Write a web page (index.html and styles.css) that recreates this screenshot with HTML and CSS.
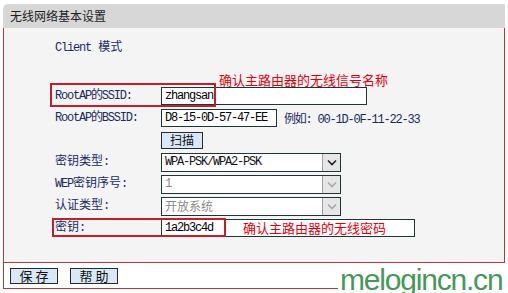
FILE: index.html
```html
<!DOCTYPE html>
<html lang="zh-CN">
  <head>
    <meta charset="UTF-8" />
    <meta name="viewport" content="width=device-width, initial-scale=1.0" />
    <title>无线网络基本设置</title>
    <link rel="stylesheet" href="styles.css">
  </head>
  <body>
    <div class="page">
      <div class="title">无线网络基本设置</div>
      <div class="panel">
        <div class="mode"><span class="lat">Client</span> 模式</div>
        <div class="form">
          <div class="row">
            <label class="lat">RootAP的SSID:</label>
            <input class="text ssid" type="text" value="zhangsan" />
            <span class="mark mark-ssid"></span>
            <span class="note note-ssid">确认主路由器的无线信号名称</span>
          </div>
          <div class="row">
            <label class="lat">RootAP的BSSID:</label>
            <input class="text bssid" type="text" value="D8-15-0D-57-47-EE" />
            <span class="hint lat">例如: 00-1D-0F-11-22-33</span>
          </div>
          <div class="row">
            <label></label>
            <button class="btn scan">扫描</button>
          </div>
          <div class="row">
            <label>密钥类型:</label>
            <div class="select">
              <span class="value lat">WPA-PSK/WPA2-PSK</span>
              <span class="arrow">
                <svg width="10" height="7" viewBox="0 0 10 7"><polyline points="1,1.5 5,5.5 9,1.5" fill="none" stroke="#222" stroke-width="1.6" /></svg>
              </span>
            </div>
          </div>
          <div class="row">
            <label><span class="lat">WEP</span>密钥序号:</label>
            <div class="select disabled">
              <span class="value lat">1</span>
              <span class="arrow">
                <svg width="10" height="7" viewBox="0 0 10 7"><polyline points="1,1.5 5,5.5 9,1.5" fill="none" stroke="#a8a8a8" stroke-width="1.6" /></svg>
              </span>
            </div>
          </div>
          <div class="row">
            <label>认证类型:</label>
            <div class="select disabled">
              <span class="value cjk">开放系统</span>
              <span class="arrow">
                <svg width="10" height="7" viewBox="0 0 10 7"><polyline points="1,1.5 5,5.5 9,1.5" fill="none" stroke="#a8a8a8" stroke-width="1.6" /></svg>
              </span>
            </div>
          </div>
          <div class="row">
            <label>密钥:</label>
            <input class="text key" type="text" value="1a2b3c4d" />
            <span class="mark mark-key"></span>
            <span class="note note-key">确认主路由器的无线密码</span>
          </div>
        </div>
      </div>
      <div class="actions">
        <button class="btn">保 存</button>
        <button class="btn">帮 助</button>
      </div>
      <div class="watermark">melogincn.cn</div>
    </div>
  </body>
</html>
```

FILE: styles.css
```css
* {
  margin: 0;
  padding: 0;
  box-sizing: border-box;
}

body {
  font-family: "Liberation Mono", "Noto Sans CJK SC", monospace;
  font-size: 12px;
  color: #1a2a66;
  background: #ffffff;
}

.lat {
  letter-spacing: -1.2px;
}

.page {
  position: relative;
  width: 502px;
  height: 289px;
  margin: 4px 0 0 3px;
}

.title {
  height: 24px;
  line-height: 24px;
  padding-left: 7px;
  background: #d7d7d7;
  border-radius: 5px 0 0 0;
  color: #222222;
  font-family: "Noto Sans CJK SC", sans-serif;
  font-size: 12px;
}

.panel {
  height: 235px;
  padding: 11px 0 0 51px;
  background: #f4f4f4;
  border: 1px solid #b23a3a;
  border-top: none;
}

.mode {
  height: 18px;
  line-height: 18px;
}

.form {
  margin-top: 28px;
}

.row {
  position: relative;
  display: flex;
  align-items: center;
  height: 22px;
}

.row label {
  width: 106px;
  line-height: 16px;
}

.text {
  height: 18px;
  padding: 0 3px;
  font-family: "Liberation Mono", monospace;
  font-size: 12px;
  letter-spacing: -1.2px;
  color: #000000;
  background: #ffffff;
  border: 1px solid #1f3535;
  outline: none;
}

.ssid {
  width: 206px;
}

.bssid {
  width: 116px;
}

.key {
  width: 254px;
}

.hint {
  margin-left: 7px;
}

.btn {
  display: flex;
  align-items: center;
  justify-content: center;
  width: 48px;
  height: 16px;
  background: #d9e8f8;
  border: 1px solid #2a2a2a;
  font-family: "Noto Sans CJK SC", sans-serif;
  font-size: 13px;
  line-height: 14px;
  color: #111111;
}

.scan {
  width: 42px;
  height: 17px;
  font-size: 12px;
}

.select {
  display: flex;
  align-items: center;
  width: 180px;
  height: 19px;
  background: #ffffff;
  border: 1px solid #1f3535;
  color: #111111;
}

.select .value {
  flex: 1;
  padding-left: 3px;
  line-height: 16px;
}

.select .cjk {
  font-family: "Noto Sans CJK SC", sans-serif;
}

.select.disabled .value {
  color: #8a8a8a;
}

.arrow {
  display: flex;
  align-items: center;
  justify-content: center;
  width: 18px;
  height: 100%;
  background: #e6e6e6;
  border-left: 1px solid #a0a0a0;
}

.mark {
  position: absolute;
  border: 2px solid #c0202c;
}

.mark-ssid {
  top: -2px;
  left: -5px;
  width: 166px;
  height: 24px;
}

.mark-key {
  top: 1px;
  left: -3px;
  width: 174px;
  height: 19px;
}

.note {
  position: absolute;
  font-family: "Noto Sans CJK SC", sans-serif;
  font-size: 13px;
  line-height: 16px;
  color: #e0000c;
}

.note-ssid {
  top: -13px;
  left: 164px;
}

.note-key {
  top: 3px;
  left: 188px;
}

.actions {
  display: flex;
  gap: 12px;
  height: 26px;
  padding: 5px 0 0 6px;
  border-left: 1px solid #b23a3a;
  border-bottom: 1px solid #b23a3a;
}

.watermark {
  position: absolute;
  right: 0;
  bottom: 0;
  width: 167px;
  height: 28px;
  padding-left: 2px;
  background: #ffffff;
  font-family: "Liberation Sans", sans-serif;
  font-size: 30px;
  line-height: 30px;
  letter-spacing: -1.2px;
  color: #46985a;
  white-space: nowrap;
}
```
